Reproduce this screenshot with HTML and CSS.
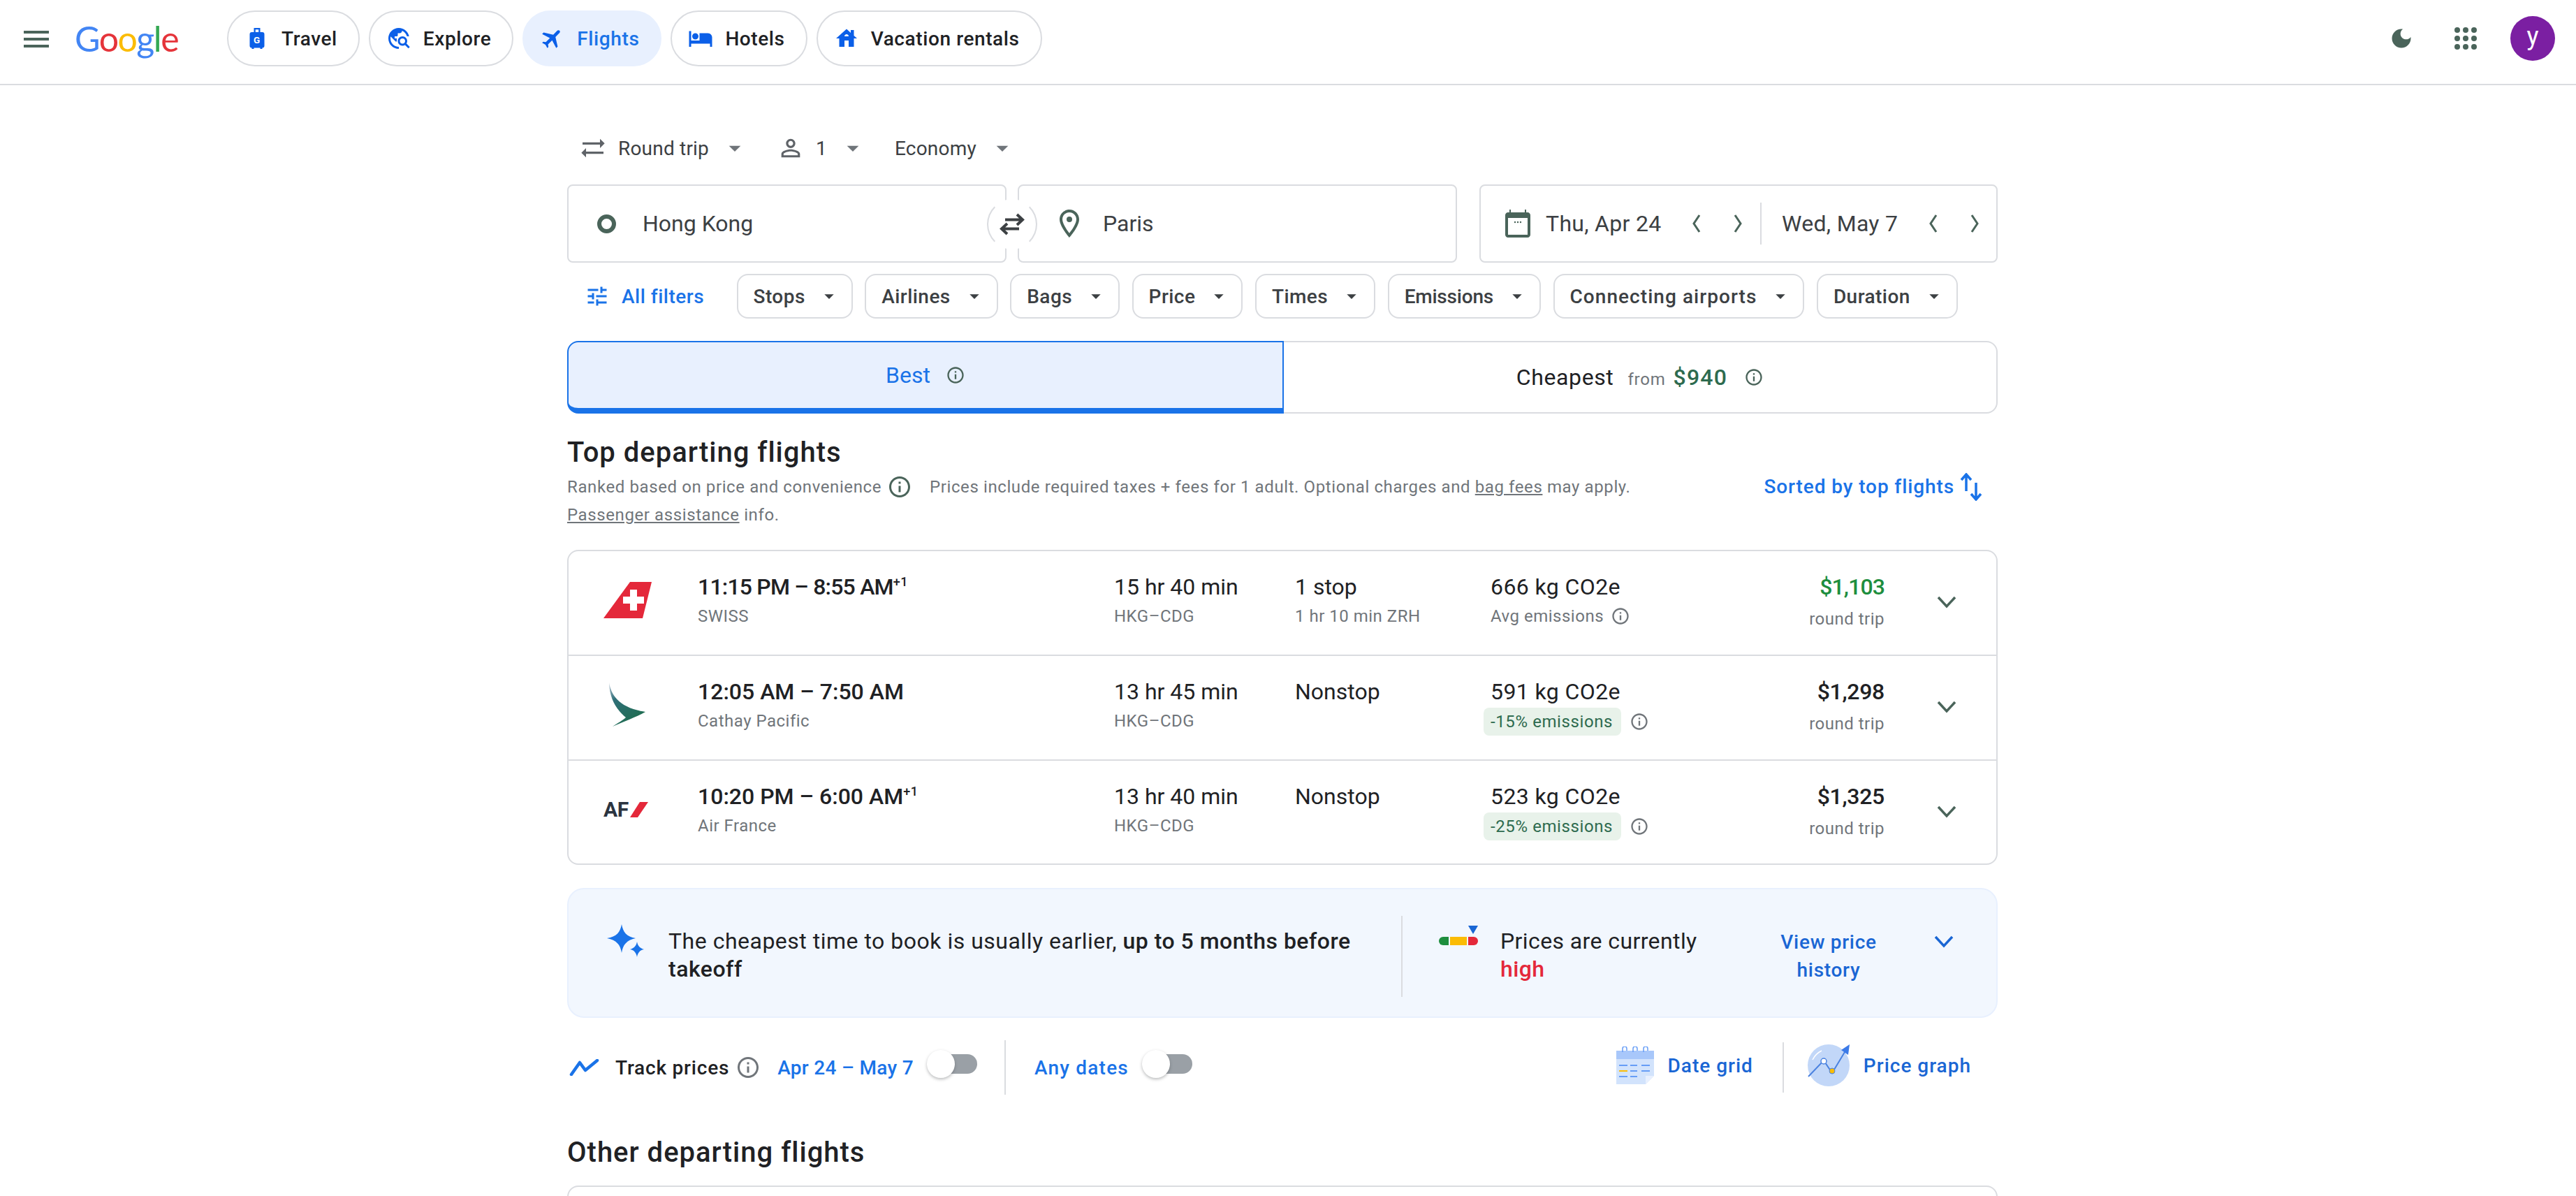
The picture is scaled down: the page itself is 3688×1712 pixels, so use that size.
FILE: index.html
```html
<!DOCTYPE html>
<html lang="en">

<head>
    <meta charset="UTF-8">
    <title>Google Flights</title>
    <link rel="stylesheet" href="styles.css">
</head>

<body>
    <header class="topbar">
        <svg class="menu-icon" viewBox="0 0 24 24"><path d="M3 18h18v-2H3v2zm0-5h18v-2H3v2zm0-7v2h18V6H3z"/></svg>
        <div class="logo"><span class="c-blue">G</span><span class="c-red">o</span><span class="c-yellow">o</span><span class="c-blue">g</span><span class="c-green">l</span><span class="c-red">e</span></div>
        <nav class="nav">
            <a class="nav-chip">
                <svg class="nav-icon" viewBox="0 0 24 24"><path d="M9 2h6v4h2a2 2 0 0 1 2 2v11a2 2 0 0 1-2 2v1h-2v-1H9v1H7v-1a2 2 0 0 1-2-2V8a2 2 0 0 1 2-2h2zm1.500 1.500V6h3V3.500z"/><text x="12" y="16.500" class="bag-g">G</text></svg>
                Travel
            </a>
            <a class="nav-chip">
                <svg class="nav-icon" viewBox="0 0 24 24"><path d="M19.300 16.900c.4-.7.7-1.500.7-2.400 0-2.500-2-4.500-4.500-4.500S11 12 11 14.500s2 4.500 4.500 4.500c.9 0 1.700-.3 2.400-.7l3.200 3.200 1.400-1.400-3.200-3.200zm-3.800.1c-1.400 0-2.500-1.100-2.500-2.500s1.100-2.500 2.500-2.500 2.500 1.100 2.500 2.500-1.100 2.500-2.500 2.500zM12 20v2C6.480 22 2 17.520 2 12S6.480 2 12 2c4.840 0 8.870 3.440 9.800 8h-2.070c-.64-2.460-2.400-4.470-4.730-5.410V5c0 1.100-.9 2-2 2h-2v2c0 .55-.45 1-1 1H8v2h2v3H9l-4.790-4.790C4.080 10.790 4 11.380 4 12c0 4.410 3.590 8 8 8z"/></svg>
                Explore
            </a>
            <a class="nav-chip active">
                <svg class="nav-icon plane" viewBox="0 0 24 24"><path d="M21 16v-2l-8-5V3.500c0-.83-.67-1.500-1.500-1.500S10 2.670 10 3.500V9l-8 5v2l8-2.500V19l-2 1.500V22l3.500-1 3.500 1v-1.500L13 19v-5.500l8 2.500z"/></svg>
                Flights
            </a>
            <a class="nav-chip">
                <svg class="nav-icon" viewBox="0 0 24 24"><path d="M7 13c1.660 0 3-1.340 3-3S8.660 7 7 7s-3 1.340-3 3 1.340 3 3 3zm12-6h-8v7H3V5H1v15h2v-3h18v3h2v-9c0-2.210-1.790-4-4-4z"/></svg>
                Hotels
            </a>
            <a class="nav-chip">
                <svg class="nav-icon" viewBox="0 0 24 24"><path d="M19 9.300V4h-3v2.600L12 3 2 12h3v8h5v-6h4v6h5v-8h3l-3-2.700zM10 10c0-1.100.9-2 2-2s2 .9 2 2h-4z"/></svg>
                Vacation rentals
            </a>
        </nav>
        <div class="topbar-right">
            <svg class="moon-icon" viewBox="0 0 24 24"><path d="M12 3c-4.970 0-9 4.030-9 9s4.030 9 9 9 9-4.030 9-9c0-.46-.04-.92-.1-1.360-.98 1.370-2.580 2.260-4.400 2.260-2.980 0-5.400-2.420-5.400-5.400 0-1.810.89-3.420 2.260-4.400-.44-.06-.9-.1-1.360-.1z"/></svg>
            <svg class="apps-icon" viewBox="0 0 32 32">
                <circle cx="4" cy="4" r="4"/><circle cx="16" cy="4" r="4"/><circle cx="28" cy="4" r="4"/>
                <circle cx="4" cy="16" r="4"/><circle cx="16" cy="16" r="4"/><circle cx="28" cy="16" r="4"/>
                <circle cx="4" cy="28" r="4"/><circle cx="16" cy="28" r="4"/><circle cx="28" cy="28" r="4"/>
            </svg>
            <div class="avatar">y</div>
        </div>
    </header>

    <main class="content">
        <div class="trip-options">
            <div class="trip-option opt-trip">
                <svg class="opt-icon" viewBox="0 0 24 24"><path d="M22 8l-4-4v3H3v2h15v3l4-4zM2 16l4 4v-3h15v-2H6v-3l-4 4z"/></svg>
                <span>Round trip</span>
                <svg class="caret-lg" viewBox="0 0 24 24"><path d="M7 10l5 5 5-5z"/></svg>
            </div>
            <div class="trip-option opt-people">
                <svg class="opt-icon" viewBox="0 0 24 24"><path d="M12 5.900c1.160 0 2.100.94 2.100 2.100s-.94 2.100-2.100 2.100S9.900 9.160 9.900 8s.94-2.100 2.100-2.100m0 9c2.970 0 6.100 1.460 6.100 2.100v1.100H5.900V17c0-.64 3.130-2.100 6.100-2.100M12 4C9.790 4 8 5.790 8 8s1.790 4 4 4 4-1.790 4-4-1.790-4-4-4zm0 9c-2.670 0-8 1.340-8 4v3h16v-3c0-2.660-5.330-4-8-4z"/></svg>
                <span>1</span>
                <svg class="caret-lg" viewBox="0 0 24 24"><path d="M7 10l5 5 5-5z"/></svg>
            </div>
            <div class="trip-option opt-class">
                <span>Economy</span>
                <svg class="caret-lg" viewBox="0 0 24 24"><path d="M7 10l5 5 5-5z"/></svg>
            </div>
        </div>

        <div class="search-row">
            <div class="search-box">
                <span class="origin-ring"></span>
                <span>Hong Kong</span>
            </div>
            <div class="search-box box-dest">
                <svg class="pin-icon" viewBox="0 0 24 24"><path d="M12 2C8.130 2 5 5.130 5 9c0 5.250 7 13 7 13s7-7.750 7-13c0-3.870-3.130-7-7-7zM7 9c0-2.760 2.240-5 5-5s5 2.240 5 5c0 2.880-2.880 7.190-5 9.880C9.920 16.210 7 11.850 7 9z"/><circle cx="12" cy="9" r="2"/></svg>
                <span>Paris</span>
            </div>
            <div class="swap-btn">
                <svg viewBox="0 0 40 32"><path d="M10 9.500h26M27 2l8 7.500-8 7.500M30 22.500H4M13 15l-8 7.500 8 7.500"/></svg>
            </div>
            <div class="date-box">
                <div class="date-cell date-from">
                    <svg class="cal-icon" viewBox="0 0 24 24"><path d="M19 4h-1V2h-1v2H7V2H6v2H5c-1.100 0-2 .9-2 2v14c0 1.100.9 2 2 2h14c1.100 0 2-.9 2-2V6c0-1.100-.9-2-2-2zm0 16H5V8h14v12z"/><circle cx="10" cy="11" r=".6"/><circle cx="12" cy="11" r=".6"/><circle cx="14" cy="11" r=".6"/></svg>
                    <span>Thu, Apr 24</span>
                    <div class="date-arrows">
                        <svg viewBox="0 0 28 28"><path d="M18 2L10 14l8 12"/></svg>
                        <svg viewBox="0 0 28 28"><path d="M10 2l8 12-8 12"/></svg>
                    </div>
                </div>
                <div class="date-cell date-to">
                    <span>Wed, May 7</span>
                    <div class="date-arrows">
                        <svg viewBox="0 0 28 28"><path d="M18 2L10 14l8 12"/></svg>
                        <svg viewBox="0 0 28 28"><path d="M10 2l8 12-8 12"/></svg>
                    </div>
                </div>
            </div>
        </div>

        <div class="filter-row">
            <div class="all-filters">
                <svg viewBox="0 0 24 24"><path d="M3 17v2h6v-2H3zM3 5v2h10V5H3zm10 16v-2h8v-2h-8v-2h-2v6h2zM7 9v2H3v2h4v2h2V9H7zm14 4v-2H11v2h10zm-6-4h2V7h4V5h-4V3h-2v6z"/></svg>
                All filters
            </div>
            <div class="filter-chip">Stops <svg viewBox="0 0 24 24"><path d="M7 10l5 5 5-5z"/></svg></div>
            <div class="filter-chip">Airlines <svg viewBox="0 0 24 24"><path d="M7 10l5 5 5-5z"/></svg></div>
            <div class="filter-chip">Bags <svg viewBox="0 0 24 24"><path d="M7 10l5 5 5-5z"/></svg></div>
            <div class="filter-chip">Price <svg viewBox="0 0 24 24"><path d="M7 10l5 5 5-5z"/></svg></div>
            <div class="filter-chip">Times <svg viewBox="0 0 24 24"><path d="M7 10l5 5 5-5z"/></svg></div>
            <div class="filter-chip chip-tight">Emissions <svg viewBox="0 0 24 24"><path d="M7 10l5 5 5-5z"/></svg></div>
            <div class="filter-chip chip-wide">Connecting airports <svg viewBox="0 0 24 24"><path d="M7 10l5 5 5-5z"/></svg></div>
            <div class="filter-chip">Duration <svg viewBox="0 0 24 24"><path d="M7 10l5 5 5-5z"/></svg></div>
        </div>

        <div class="tabs">
            <div class="tab tab-best">
                <span>Best</span>
                <svg class="info" viewBox="0 0 24 24"><path d="M11 7h2v2h-2zm0 4h2v6h-2zm1-9C6.480 2 2 6.480 2 12s4.480 10 10 10 10-4.480 10-10S17.520 2 12 2zm0 18c-4.410 0-8-3.590-8-8s3.590-8 8-8 8 3.590 8 8-3.590 8-8 8z"/></svg>
            </div>
            <div class="tab tab-cheap">
                <span class="tab-name">Cheapest</span>
                <span class="tab-from">from</span>
                <span class="tab-price">$940</span>
                <svg class="info" viewBox="0 0 24 24"><path d="M11 7h2v2h-2zm0 4h2v6h-2zm1-9C6.480 2 2 6.480 2 12s4.480 10 10 10 10-4.480 10-10S17.520 2 12 2zm0 18c-4.410 0-8-3.590-8-8s3.590-8 8-8 8 3.590 8 8-3.590 8-8 8z"/></svg>
            </div>
        </div>

        <h2 class="section-title">Top departing flights</h2>
        <div class="section-meta">
            <div class="meta-text">
                <div class="meta-line">
                    <span>Ranked based on price and convenience</span>
                    <svg class="info info-lg" viewBox="0 0 24 24"><path d="M11 7h2v2h-2zm0 4h2v6h-2zm1-9C6.480 2 2 6.480 2 12s4.480 10 10 10 10-4.480 10-10S17.520 2 12 2zm0 18c-4.410 0-8-3.590-8-8s3.590-8 8-8 8 3.590 8 8-3.590 8-8 8z"/></svg>
                    <span class="meta-prices">Prices include required taxes + fees for 1 adult. Optional charges and <u>bag fees</u> may apply.</span>
                </div>
                <div class="meta-line"><span><u>Passenger assistance</u> info.</span></div>
            </div>
            <div class="sorted">
                Sorted by top flights
                <svg viewBox="0 0 32 40"><path d="M9 26V3M2 10l7-8 7 8M23 14v23M16 30l7 8 7-8"/></svg>
            </div>
        </div>

        <div class="flight-list">
            <div class="flight-row">
                <div class="airline-logo">
                    <svg class="logo-swiss" viewBox="0 0 70 52"><path fill="#e4283a" d="M38 0h31L56 52H0z"/><path fill="#fff" d="M38 11h10v10h10v10H48v10H38V31H28V21h10z"/></svg>
                </div>
                <div>
                    <div class="line-main time time-ones">11:15 PM – 8:55 AM<sup>+1</sup></div>
                    <div class="line-sub">SWISS</div>
                </div>
                <div>
                    <div class="line-main">15 hr 40 min</div>
                    <div class="line-sub">HKG–CDG</div>
                </div>
                <div>
                    <div class="line-main">1 stop</div>
                    <div class="line-sub">1 hr 10 min ZRH</div>
                </div>
                <div class="emissions">
                    <div class="line-main">666 kg CO2e</div>
                    <div class="line-sub emit-sub">Avg emissions
                        <svg class="info info-grey" viewBox="0 0 24 24"><path d="M11 7h2v2h-2zm0 4h2v6h-2zm1-9C6.480 2 2 6.480 2 12s4.480 10 10 10 10-4.480 10-10S17.520 2 12 2zm0 18c-4.410 0-8-3.590-8-8s3.590-8 8-8 8 3.590 8 8-3.590 8-8 8z"/></svg>
                    </div>
                </div>
                <div class="price">
                    <div class="line-main amount amount-low">$1,103</div>
                    <div class="line-sub">round trip</div>
                </div>
                <svg class="row-chevron" viewBox="0 0 28 18"><path d="M2 2l12 13L26 2"/></svg>
            </div>

            <div class="flight-row">
                <div class="airline-logo">
                    <svg class="logo-cathay" viewBox="0 0 52 64">
                        <defs><linearGradient id="cathay" x1="0" y1="0" x2="0.6" y2="1"><stop offset="0" stop-color="#b9c6d6"/><stop offset="0.35" stop-color="#2f6f78"/><stop offset="1" stop-color="#1f6d4f"/></linearGradient></defs>
                        <path fill="url(#cathay)" d="M0 0C3 18 14 36 52 42 38 50 20 56 5 63c7-5 15-9 19-13C10 38 1 24 0 0z"/>
                    </svg>
                </div>
                <div>
                    <div class="line-main time">12:05 AM – 7:50 AM</div>
                    <div class="line-sub">Cathay Pacific</div>
                </div>
                <div>
                    <div class="line-main">13 hr 45 min</div>
                    <div class="line-sub">HKG–CDG</div>
                </div>
                <div>
                    <div class="line-main">Nonstop</div>
                </div>
                <div class="emissions">
                    <div class="line-main">591 kg CO2e</div>
                    <div class="emit-badge-row">
                        <span class="emit-badge">-15% emissions</span>
                        <svg class="info info-grey" viewBox="0 0 24 24"><path d="M11 7h2v2h-2zm0 4h2v6h-2zm1-9C6.480 2 2 6.480 2 12s4.480 10 10 10 10-4.480 10-10S17.520 2 12 2zm0 18c-4.410 0-8-3.590-8-8s3.590-8 8-8 8 3.590 8 8-3.590 8-8 8z"/></svg>
                    </div>
                </div>
                <div class="price">
                    <div class="line-main amount">$1,298</div>
                    <div class="line-sub">round trip</div>
                </div>
                <svg class="row-chevron" viewBox="0 0 28 18"><path d="M2 2l12 13L26 2"/></svg>
            </div>

            <div class="flight-row">
                <div class="airline-logo">
                    <div class="logo-af"><span>AF</span><svg viewBox="0 0 26 22"><path fill="#e4283a" d="M14 0h12L11 22H0z"/></svg></div>
                </div>
                <div>
                    <div class="line-main time">10:20 PM – 6:00 AM<sup>+1</sup></div>
                    <div class="line-sub">Air France</div>
                </div>
                <div>
                    <div class="line-main">13 hr 40 min</div>
                    <div class="line-sub">HKG–CDG</div>
                </div>
                <div>
                    <div class="line-main">Nonstop</div>
                </div>
                <div class="emissions">
                    <div class="line-main">523 kg CO2e</div>
                    <div class="emit-badge-row">
                        <span class="emit-badge">-25% emissions</span>
                        <svg class="info info-grey" viewBox="0 0 24 24"><path d="M11 7h2v2h-2zm0 4h2v6h-2zm1-9C6.480 2 2 6.480 2 12s4.480 10 10 10 10-4.480 10-10S17.520 2 12 2zm0 18c-4.410 0-8-3.590-8-8s3.590-8 8-8 8 3.590 8 8-3.590 8-8 8z"/></svg>
                    </div>
                </div>
                <div class="price">
                    <div class="line-main amount">$1,325</div>
                    <div class="line-sub">round trip</div>
                </div>
                <svg class="row-chevron" viewBox="0 0 28 18"><path d="M2 2l12 13L26 2"/></svg>
            </div>
        </div>

        <div class="insights">
            <div class="tip">
                <svg class="spark" viewBox="0 0 54 48"><path fill="#1a73e8" d="M21 0c2 11 7 18 20 20-13 3-18 9-20 21-2-12-7-18-21-21 14-2 19-9 21-20z"/><path fill="#1a73e8" d="M43 25c1 6 4 9 10 11-6 1-9 5-10 11-1-6-4-10-10-11 6-2 9-5 10-11z"/></svg>
                <p class="tip-text">The cheapest time to book is usually earlier, <b>up to 5 months before</b><br><b>takeoff</b></p>
            </div>
            <div class="rule rule-insights"></div>
            <div class="level">
                <svg class="gauge" viewBox="0 0 56 28">
                    <path fill="#1a66d4" d="M42 0h14l-7 12z"/>
                    <path fill="#1e8e3e" d="M14 16H6a6 6 0 0 0 0 12h8z"/>
                    <path fill="#fbbc05" d="M16 16h24v12H16z"/>
                    <path fill="#e4283a" d="M42 16h8a6 6 0 0 1 0 12h-8z"/>
                </svg>
                <div class="level-text">
                    <p>Prices are currently</p>
                    <p class="level-high">high</p>
                </div>
            </div>
            <div class="history-link">View price history</div>
            <svg class="history-chevron" viewBox="0 0 28 18"><path d="M2 2l12 13L26 2"/></svg>
        </div>

        <div class="track-row">
            <svg class="trend" viewBox="0 0 44 24"><path d="M3 22L15 5l8 11L40 2"/></svg>
            <span class="track-label">Track prices</span>
            <svg class="info info-lg info-grey" viewBox="0 0 24 24"><path d="M11 7h2v2h-2zm0 4h2v6h-2zm1-9C6.480 2 2 6.480 2 12s4.480 10 10 10 10-4.480 10-10S17.520 2 12 2zm0 18c-4.410 0-8-3.590-8-8s3.590-8 8-8 8 3.590 8 8-3.590 8-8 8z"/></svg>
            <span class="track-link track-dates">Apr 24 – May 7</span>
            <div class="toggle"><span class="toggle-thumb"></span></div>
            <div class="rule rule-track"></div>
            <span class="track-link track-any">Any dates</span>
            <div class="toggle"><span class="toggle-thumb"></span></div>

            <div class="track-tools">
                <svg class="tool-grid" viewBox="0 0 54 54">
                    <path fill="#d2e3fc" d="M0 6h54v36L42 54H0z"/>
                    <path fill="#a8c7fa" d="M0 6h54v12H0z"/>
                    <path fill="#e8f0fe" d="M42 54l12-12H42z"/>
                    <path fill="none" stroke="#669df6" stroke-width="1.5" d="M9 8V3a3 3 0 0 1 6 0v3M24 8V3a3 3 0 0 1 6 0v3M39 8V3a3 3 0 0 1 6 0v3"/>
                    <path stroke="#669df6" stroke-width="2" d="M4 27h12M20 27h10M36 27h12M20 35h10M36 35h12M4 43h12M20 43h10"/>
                    <path stroke="#fbbc05" stroke-width="2" d="M4 35h12"/>
                </svg>
                <span class="tool-label">Date grid</span>
                <div class="rule rule-tools"></div>
                <svg class="tool-graph" viewBox="0 0 60 60">
                    <ellipse cx="30" cy="30" rx="30" ry="30" fill="#c2d7f8"/>
                    <path fill="none" stroke="#fff" stroke-width="1.5" d="M7 22c3-6 7-10 13-13"/>
                    <path fill="none" stroke="#4a82e0" stroke-width="2" d="M1 46l22-23 12 18L56 6"/>
                    <path fill="#3b7ae8" d="M60 0l-2 15-10-7z"/>
                    <circle cx="23" cy="24" r="4" fill="#fff" stroke="#4a82e0" stroke-width="1.5"/>
                    <circle cx="35" cy="38" r="4" fill="#fbbc05" stroke="#4a82e0" stroke-width="1"/>
                </svg>
                <span class="tool-label">Price graph</span>
            </div>
        </div>

        <h2 class="section-title title-other">Other departing flights</h2>
        <div class="flight-list list-other"></div>
    </main>
</body>

</html>
```

FILE: styles.css
```css
/* Reset some default styles */
html,
body,
h2,
p {
    margin: 0;
    padding: 0;
}

html {
    height: 1712px;
    overflow: hidden;
}

body {
    height: 1712px;
    overflow: hidden;
    font-family: Roboto, "Noto Sans", Arial, sans-serif;
    font-size: 28px;
    color: #202124;
    background-color: #fff;
}

svg {
    display: block;
    flex: none;
}

b {
    font-weight: 500;
}

/* Top bar */
.topbar {
    display: flex;
    align-items: center;
    height: 122px;
    padding-left: 28px;
    box-sizing: border-box;
    border-bottom: 2px solid #dadce0;
}

.menu-icon {
    width: 48px;
    height: 48px;
    margin-top: -8px;
    fill: #4a645a;
}

.logo {
    width: 150px;
    margin-left: 31px;
    margin-top: -10px;
    font-family: Lato, Roboto, sans-serif;
    font-size: 50px;
    line-height: 64px;
    letter-spacing: -1.5px;
}

.c-blue { color: #4285f4; }
.c-red { color: #e5343a; }
.c-yellow { color: #fbbc05; }
.c-green { color: #34a853; }

.nav {
    display: flex;
    gap: 13px;
    margin-left: 68px;
    margin-top: -10px;
}

.nav-chip {
    display: flex;
    align-items: center;
    gap: 17px;
    height: 80px;
    padding: 0 30px 0 23px;
    box-sizing: border-box;
    border: 2px solid #dadce0;
    border-radius: 40px;
    font-weight: 500;
    letter-spacing: .6px;
}

.nav-chip.active {
    color: #1a73e8;
    background-color: #e8f0fe;
    border-color: #e8f0fe;
}

.nav-icon {
    width: 36px;
    height: 36px;
    fill: #0b5fe8;
}

.plane {
    transform: rotate(45deg);
}

.bag-g {
    font-family: Roboto, sans-serif;
    font-size: 9px;
    font-weight: 700;
    text-anchor: middle;
    fill: #fff;
}

.topbar-right {
    display: flex;
    align-items: center;
    margin-left: auto;
    margin-right: 30px;
    margin-top: -10px;
}

.moon-icon {
    width: 36px;
    height: 36px;
    fill: #4a645a;
}

.apps-icon {
    width: 32px;
    height: 32px;
    margin-left: 58px;
    fill: #4a645a;
}

.avatar {
    width: 64px;
    height: 64px;
    margin-left: 48px;
    border-radius: 50%;
    background-color: #7b1fa2;
    color: #fff;
    font-size: 36px;
    line-height: 58px;
    text-align: center;
}

/* Main column */
.content {
    width: 2048px;
    margin-left: 812px;
}

.trip-options {
    display: flex;
    align-items: center;
    height: 72px;
    margin-top: 54px;
    color: #3c4043;
    letter-spacing: .2px;
}

.trip-option {
    display: flex;
    align-items: center;
}

.opt-icon {
    width: 40px;
    height: 40px;
    fill: #5f6368;
}

.caret-lg {
    width: 40px;
    height: 40px;
    fill: #70757a;
}

.opt-trip { margin-left: 17px; }
.opt-trip span { margin-left: 16px; margin-right: 17px; }
.opt-people { margin-left: 40px; }
.opt-people span { margin-left: 16px; margin-right: 17px; }
.opt-class { margin-left: 40px; }
.opt-class span { margin-right: 17px; }

/* Search boxes */
.search-row {
    position: relative;
    display: flex;
    margin-top: 16px;
    font-size: 32px;
    color: #3c4043;
}

.search-box {
    display: flex;
    align-items: center;
    width: 629px;
    height: 112px;
    padding-left: 41px;
    box-sizing: border-box;
    border: 2px solid #dadce0;
    border-radius: 8px;
}

.box-dest {
    margin-left: 16px;
    padding-left: 48px;
}

.origin-ring {
    width: 27px;
    height: 27px;
    margin-right: 38px;
    box-sizing: border-box;
    border: 6px solid #4a645a;
    border-radius: 50%;
}

.pin-icon {
    width: 48px;
    height: 48px;
    margin-right: 24px;
    fill: #4a645a;
}

.swap-btn {
    position: absolute;
    left: 601px;
    top: 21px;
    display: flex;
    align-items: center;
    justify-content: center;
    width: 72px;
    height: 72px;
    box-sizing: border-box;
    border: 2px solid;
    border-color: transparent #dadce0;
    border-radius: 50%;
    background-color: #fff;
}

.swap-btn svg {
    width: 40px;
    height: 32px;
    fill: none;
    stroke: #3c4043;
    stroke-width: 4;
}

.date-box {
    display: flex;
    align-items: center;
    width: 742px;
    height: 112px;
    margin-left: 32px;
    box-sizing: border-box;
    border: 2px solid #dadce0;
    border-radius: 8px;
    letter-spacing: .3px;
}

.date-cell {
    display: flex;
    align-items: center;
    height: 60px;
    box-sizing: border-box;
}

.date-from {
    width: 400px;
    padding-left: 29px;
    padding-right: 18px;
}

.date-to {
    flex: 1;
    padding-left: 29px;
    padding-right: 17px;
    border-left: 2px solid #dadce0;
}

.cal-icon {
    width: 48px;
    height: 48px;
    margin-right: 16px;
    fill: #4a645a;
}

.date-arrows {
    display: flex;
    gap: 31px;
    margin-left: auto;
}

.date-arrows svg {
    width: 28px;
    height: 28px;
    fill: none;
    stroke: #4a645a;
    stroke-width: 3;
}

/* Filter chips */
.filter-row {
    display: flex;
    align-items: center;
    gap: 17.5px;
    margin-top: 16px;
}

.all-filters {
    display: flex;
    align-items: center;
    width: 225px;
    padding-left: 25px;
    box-sizing: border-box;
    color: #1a73e8;
    font-weight: 500;
    gap: 17px;
    letter-spacing: .5px;
}

.all-filters svg {
    width: 36px;
    height: 36px;
    fill: #1a73e8;
}

.filter-chip {
    display: flex;
    align-items: center;
    gap: 18px;
    height: 64px;
    padding: 0 16px 0 22px;
    box-sizing: border-box;
    border: 2px solid #dadce0;
    border-radius: 16px;
    color: #3c4043;
    font-weight: 500;
    letter-spacing: .45px;
}

.chip-tight { letter-spacing: -.2px; }
.chip-wide { letter-spacing: 1.05px; }

.filter-chip svg {
    width: 32px;
    height: 32px;
    fill: #3c4043;
}

/* Best / Cheapest tabs */
.tabs {
    display: flex;
    height: 104px;
    margin-top: 32px;
    font-size: 32px;
}

.tab {
    display: flex;
    align-items: center;
    justify-content: center;
    box-sizing: border-box;
}

.tab-best {
    width: 1026px;
    gap: 22px;
    border: 2px solid #1a73e8;
    border-bottom-width: 8px;
    border-radius: 16px 0 0 16px;
    background-color: #e8f0fe;
    color: #1a73e8;
}

.tab-cheap {
    flex: 1;
    border: 2px solid #dadce0;
    border-left: 0;
    border-radius: 0 16px 16px 0;
}

.tab-name {
    letter-spacing: .6px;
}

.tab-from {
    margin-left: 20px;
    font-size: 24px;
    color: #70757a;
    padding-top: 6px;
    letter-spacing: .8px;
}

.tab-price {
    margin-left: 11px;
    font-weight: 500;
    color: #2e6b4f;
    letter-spacing: 1.2px;
}

.info {
    width: 28px;
    height: 28px;
    fill: #4a645a;
}

.tab-cheap .info {
    margin-left: 24px;
}

.info-lg {
    width: 36px;
    height: 36px;
}

.info-grey {
    fill: #70757a;
}

/* Section heading */
.section-title {
    margin-top: 30px;
    font-size: 40px;
    line-height: 52px;
    font-weight: 500;
    letter-spacing: 1px;
}

.section-meta {
    display: flex;
    justify-content: space-between;
    margin-top: 3px;
    font-size: 24px;
    line-height: 40px;
    color: #70757a;
    letter-spacing: .6px;
}

.meta-line {
    display: flex;
    align-items: center;
}

.meta-line .info-lg {
    margin-left: 8px;
}

.meta-prices {
    margin-left: 25px;
}

.sorted {
    display: flex;
    align-items: center;
    gap: 8px;
    height: 40px;
    margin-right: 22px;
    font-size: 28px;
    font-weight: 500;
    color: #1a73e8;
    letter-spacing: .9px;
}

.sorted svg {
    width: 32px;
    height: 40px;
    fill: none;
    stroke: #1a73e8;
    stroke-width: 3.5;
}

/* Flight list */
.flight-list {
    margin-top: 30px;
    box-sizing: border-box;
    border: 2px solid #dadce0;
    border-radius: 16px;
}

.flight-row {
    display: grid;
    grid-template-columns: 185px 596px 259px 280px 396px 168px auto;
    height: 150px;
    padding-top: 31px;
    box-sizing: border-box;
    border-bottom: 2px solid #dadce0;
}

.flight-row:last-child {
    height: 147px;
    border-bottom: 0;
}

.airline-logo {
    display: flex;
    align-items: center;
    height: 78px;
    padding-left: 50px;
}

.logo-swiss {
    width: 70px;
    height: 52px;
}

.logo-cathay {
    width: 52px;
    height: 64px;
    margin-left: 8px;
}

.logo-af {
    display: flex;
    align-items: flex-end;
    width: 70px;
    font-size: 30px;
    line-height: 22px;
    font-weight: 700;
    letter-spacing: -.5px;
    color: #2b3440;
}

.logo-af svg {
    width: 26px;
    height: 22px;
    margin-left: 2px;
}

.line-main {
    font-size: 32px;
    line-height: 40px;
}

.time,
.amount {
    font-weight: 500;
}

.time-ones {
    letter-spacing: -.8px;
}

.time sup {
    font-size: 18px;
    line-height: 0;
    letter-spacing: .5px;
}

.emissions .line-main {
    letter-spacing: .4px;
}

.line-sub {
    margin-top: 2px;
    font-size: 24px;
    line-height: 40px;
    color: #70757a;
    letter-spacing: .5px;
}

.emit-sub {
    display: flex;
    align-items: center;
    gap: 10px;
}

.emit-badge-row {
    display: flex;
    align-items: center;
    gap: 12px;
    margin: 3px 0 0 -10px;
}

.emit-badge {
    padding: 0 12px 0 10px;
    border-radius: 8px;
    background-color: #e8f2ea;
    color: #2e6b4f;
    font-size: 24px;
    line-height: 40px;
    letter-spacing: .6px;
}

.price {
    text-align: right;
}

.price .line-sub {
    margin-top: 6px;
}

.amount {
    letter-spacing: -.3px;
}

.amount-low {
    color: #1e8e3e;
    letter-spacing: -.9px;
}

.row-chevron {
    width: 28px;
    height: 18px;
    margin: 33px 0 0 75px;
    fill: none;
    stroke: #4a645a;
    stroke-width: 3.5;
}

/* Price insights */
.insights {
    display: flex;
    height: 186px;
    margin-top: 33px;
    box-sizing: border-box;
    border: 2px solid #e8f0fe;
    border-radius: 24px;
    background-color: #f2f7fe;
}

.tip {
    display: flex;
    width: 1192px;
    padding: 54px 0 0 55px;
    box-sizing: border-box;
}

.spark {
    width: 54px;
    height: 48px;
    margin-top: -4px;
}

.tip-text {
    width: 1020px;
    margin-left: 34px;
    font-size: 32px;
    line-height: 40px;
    letter-spacing: .5px;
}

.rule {
    flex: none;
    width: 2px;
    background-color: #dadce0;
}

.rule-insights {
    height: 116px;
    margin-top: 38px;
}

.level {
    display: flex;
    padding: 52px 0 0 52px;
}

.gauge {
    width: 56px;
    height: 28px;
}

.level-text {
    width: 320px;
    margin-left: 32px;
    margin-top: 2px;
    font-size: 32px;
    line-height: 40px;
    letter-spacing: .4px;
}

.level-high {
    font-weight: 500;
    color: #e4283a;
}

.history-link {
    width: 150px;
    margin: 56px 0 0 75px;
    font-size: 28px;
    line-height: 40px;
    font-weight: 500;
    text-align: center;
    color: #1a66d4;
    letter-spacing: .7px;
}

.history-chevron {
    width: 28px;
    height: 18px;
    margin: 66px 0 0 76px;
    fill: none;
    stroke: #1a66d4;
    stroke-width: 3.5;
}

/* Track prices row */
.track-row {
    display: flex;
    align-items: center;
    height: 78px;
    margin-top: 32px;
    font-weight: 500;
}

.trend {
    width: 44px;
    height: 24px;
    margin-left: 3px;
    fill: none;
    stroke: #1a73e8;
    stroke-width: 4.5;
    stroke-linecap: round;
    stroke-linejoin: round;
}

.track-label {
    margin-left: 22px;
    letter-spacing: .8px;
}

.track-row .info-lg {
    margin-left: 9px;
}

.track-link {
    color: #1a73e8;
    letter-spacing: .3px;
}

.track-dates {
    margin-left: 24px;
}

.track-any {
    letter-spacing: 1.2px;
}

.toggle {
    position: relative;
    width: 72px;
    height: 28px;
    margin: -10px 0 0 19px;
}

.toggle::before {
    content: "";
    position: absolute;
    top: 0;
    bottom: 0;
    left: 8px;
    right: 0;
    border-radius: 14px;
    background-color: #9aa0a6;
}

.toggle-thumb {
    position: absolute;
    left: 0;
    top: -6px;
    width: 40px;
    height: 40px;
    border-radius: 50%;
    background-color: #fff;
    box-shadow: 0 2px 4px rgba(60, 64, 67, .35);
}

.rule-track {
    height: 78px;
    margin: 0 41px 0 39px;
}

.track-tools {
    display: flex;
    align-items: center;
    margin-left: auto;
    margin-right: 38px;
    margin-top: -6px;
    color: #1a66d4;
    letter-spacing: 1px;
}

.tool-grid {
    width: 54px;
    height: 54px;
}

.tool-graph {
    width: 60px;
    height: 60px;
}

.tool-label {
    margin-left: 20px;
}

.rule-tools {
    height: 72px;
    margin: 6px 34px 0 42px;
}

.title-other {
    margin-top: 57px;
}

.list-other {
    height: 100px;
    margin-top: 21px;
}
```
